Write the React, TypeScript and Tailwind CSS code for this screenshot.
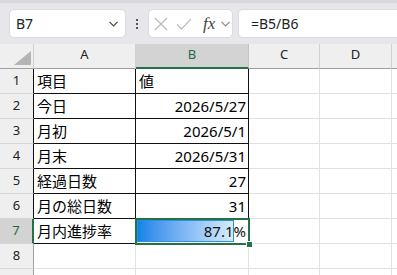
import React from "react";

// ---------------------------------------------------------------------------
// Sheet data
// ---------------------------------------------------------------------------
const rows: { label: string; value: string; align: "left" | "right" }[] = [
  { label: "項目", value: "値", align: "left" },
  { label: "今日", value: "2026/5/27", align: "right" },
  { label: "月初", value: "2026/5/1", align: "right" },
  { label: "月末", value: "2026/5/31", align: "right" },
  { label: "経過日数", value: "27", align: "right" },
  { label: "月の総日数", value: "31", align: "right" },
];

const cellFont = { fontFamily: '"Noto Sans", "Noto Sans CJK JP", sans-serif' };
const uiFont = { fontFamily: '"Noto Sans", "Open Sans", sans-serif' };

// ---------------------------------------------------------------------------
// Toolbar (name box + formula bar)
// ---------------------------------------------------------------------------
function Chevron({ className }: { className: string }) {
  return (
    <svg width="9" height="6" viewBox="0 0 9 6" className={className}>
      <path d="M0.5 0.8 L4.5 4.8 L8.5 0.8" fill="none" stroke="currentColor" strokeWidth="1.2" />
    </svg>
  );
}

function Toolbar() {
  return (
    <div
      className="flex h-[44px] items-start border-t-[3px] border-[#d8d7dc] bg-[#e7e6eb] pl-[9px] pt-[6px]"
      style={uiFont}
    >
      {/* Name box */}
      <div className="flex h-[29px] w-[117px] items-center justify-between rounded-[5px] border border-[#dcdbe0] bg-white pl-[6px] pr-[7px]">
        <span className="text-[14px] text-[#222]">B7</span>
        <Chevron className="text-[#444]" />
      </div>

      {/* Vertical dots */}
      <div className="flex h-[29px] w-[22px] flex-col items-center justify-center gap-[2px]">
        <span className="h-[2px] w-[2px] bg-[#555]" />
        <span className="h-[2px] w-[2px] bg-[#555]" />
        <span className="h-[2px] w-[2px] bg-[#555]" />
      </div>

      {/* Cancel / enter / fx */}
      <div className="flex h-[29px] w-[85px] items-center rounded-[5px] border border-[#dcdbe0] bg-white pl-[5px]">
        <svg width="14" height="14" viewBox="0 0 14 14" className="text-[#b9b9b9]">
          <path d="M1 1 L13 13 M13 1 L1 13" stroke="currentColor" strokeWidth="1.1" />
        </svg>
        <svg width="16" height="12" viewBox="0 0 16 12" className="ml-[8px] text-[#b9b9b9]">
          <path d="M1 6.5 L5.5 11 L15 1" fill="none" stroke="currentColor" strokeWidth="1.1" />
        </svg>
        <span
          className="ml-[11px] text-[17px] italic leading-none text-[#444]"
          style={{ fontFamily: '"Liberation Serif", serif' }}
        >
          fx
        </span>
        <Chevron className="ml-[6px] text-[#8a8a8a]" />
      </div>

      {/* Formula */}
      <div className="ml-[5px] flex h-[29px] flex-1 items-center rounded-l-[5px] border border-r-0 border-[#dcdbe0] bg-white pl-[12px]">
        <span className="text-[14px] text-[#222]">=B5/B6</span>
      </div>
    </div>
  );
}

// ---------------------------------------------------------------------------
// Grid
// ---------------------------------------------------------------------------
function ColumnHeader() {
  return (
    <div className="flex h-[25px] bg-[#efefef] text-[13px] text-[#222]" style={uiFont}>
      <div className="relative w-[34px] border-b border-r border-b-[#a0a0a0] border-r-[#d0d0d0]">
        <div
          className="absolute bottom-[3px] right-[2px] h-[14px] w-[17px] bg-[#b4b4b4]"
          style={{ clipPath: "polygon(100% 0, 100% 100%, 0 100%)" }}
        />
      </div>
      <div className="flex w-[102px] items-center justify-center border-b border-r border-b-[#a0a0a0] border-r-[#d0d0d0] pb-[3px]">
        A
      </div>
      <div className="flex w-[113px] items-center justify-center border-b-2 border-r border-b-[#217346] border-r-[#c4c4c4] bg-[#d3d3d3] pb-[2px] text-[#1e6b41]">
        B
      </div>
      <div className="flex w-[71px] items-center justify-center border-b border-r border-b-[#a0a0a0] border-r-[#d0d0d0] pb-[3px]">
        C
      </div>
      <div className="flex w-[72px] items-center justify-center border-b border-r border-b-[#a0a0a0] border-r-[#d0d0d0] pb-[3px]">
        D
      </div>
      <div className="flex-1 border-b border-b-[#a0a0a0]" />
    </div>
  );
}

function RowHeader({ n, variant }: { n?: number; variant: "table" | "selected" | "plain" }) {
  const cls =
    variant === "selected"
      ? "bg-[#d3d3d3] text-[#1e6b41] border-r-2 border-r-[#217346]"
      : variant === "table"
        ? "bg-[#efefef] text-[#222] border-r border-r-[#111]"
        : "bg-[#efefef] text-[#222] border-r border-r-[#a0a0a0]";
  return (
    <div
      className={`flex w-[34px] items-center justify-center border-b border-b-[#d6d6d6] text-[13px] ${cls}`}
      style={uiFont}
    >
      {n}
    </div>
  );
}

function EmptyCells() {
  return (
    <>
      <div className="w-[71px] border-b border-r border-[#e1e1e1]" />
      <div className="w-[72px] border-b border-r border-[#e1e1e1]" />
      <div className="flex-1 border-b border-[#e1e1e1]" />
    </>
  );
}

function DataRow({ n, label, value, align }: { n: number; label: string; value: string; align: "left" | "right" }) {
  return (
    <div className="flex h-[25px]">
      <RowHeader n={n} variant="table" />
      <div className="flex w-[102px] items-center border-b border-r border-[#111] pl-[3px] text-[15px] text-black" style={cellFont}>
        {label}
      </div>
      <div
        className={`flex w-[113px] items-center border-b border-r border-[#111] text-[15px] text-black ${
          align === "right" ? "justify-end pr-[2px]" : "pl-[3px]"
        }`}
        style={cellFont}
      >
        {value}
      </div>
      <EmptyCells />
    </div>
  );
}

function ProgressRow() {
  return (
    <div className="flex h-[25px]">
      <RowHeader n={7} variant="selected" />
      <div className="flex w-[102px] items-center border-b border-r border-[#111] pl-[3px] text-[15px] text-black" style={cellFont}>
        月内進捗率
      </div>
      <div className="relative flex w-[113px] items-center justify-end border-b border-r border-[#111] pr-[2px] text-[15px] text-[#111]" style={cellFont}>
        {/* data bar */}
        <div className="absolute left-[1px] top-[1px] h-[22px] w-[97px] border border-[#2d8fe6] bg-linear-to-r from-[#0a83e7] to-[#d9ebfb]" />
        <span className="relative">87.1%</span>
        {/* selection */}
        <div className="absolute -left-[1px] -top-[1px] -right-[2px] -bottom-[2px] border-2 border-[#217346]" />
        <div className="absolute -bottom-[5px] -right-[5px] h-[7px] w-[7px] border border-white bg-[#217346]" />
      </div>
      <EmptyCells />
    </div>
  );
}

function EmptyRow({ n }: { n?: number }) {
  return (
    <div className="flex h-[25px]">
      <RowHeader n={n} variant="plain" />
      <div className="w-[102px] border-b border-r border-[#e1e1e1]" />
      <div className="w-[113px] border-b border-r border-[#e1e1e1]" />
      <EmptyCells />
    </div>
  );
}

export default function App() {
  return (
    <div className="h-[275px] w-[397px] overflow-hidden bg-white">
      <Toolbar />
      <ColumnHeader />
      {rows.map((r, i) => (
        <DataRow key={r.label} n={i + 1} label={r.label} value={r.value} align={r.align} />
      ))}
      <ProgressRow />
      <EmptyRow n={8} />
      {/* row 9 is cut off by the window; only its top sliver shows */}
      <EmptyRow />
    </div>
  );
}
